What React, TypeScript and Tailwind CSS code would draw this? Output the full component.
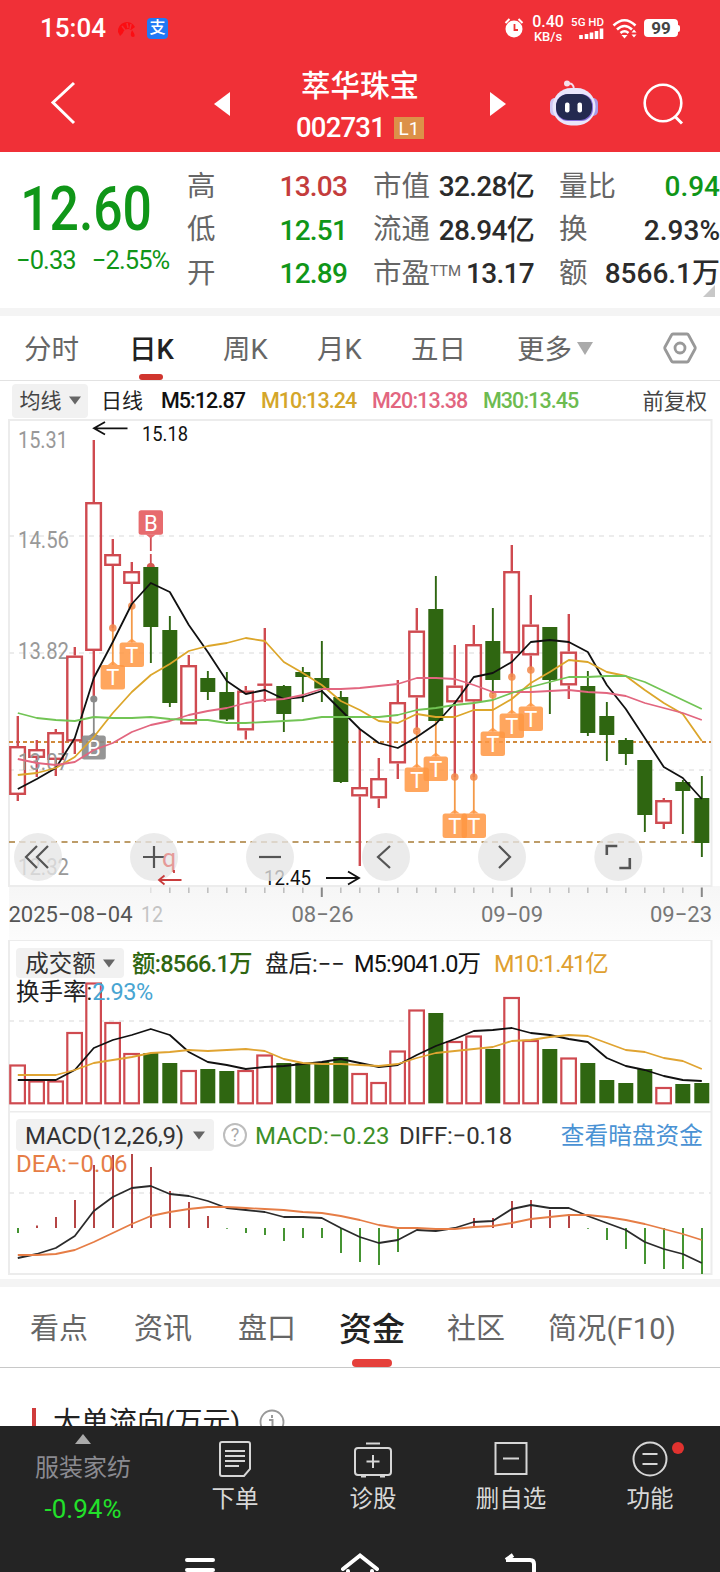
import type { ReactNode } from "react";

type Candle = { up: boolean; high: number; top: number; bottom: number; low: number };

const RED = "#cf4a50";
const GREEN = "#2f6611";
const STEP = 19;
const x = (i: number) => 17.8 + STEP * i;

// [up, high, bodyTop, bodyBottom, low]
const RAW: [number, number, number, number, number][] = [
  [1, 716, 746, 795, 801], [1, 740, 749, 758, 777], [1, 729, 732, 760, 776], [1, 647, 655.5, 741.5, 754],
  [1, 440, 502, 651, 696], [1, 539, 554, 566, 628], [1, 562, 571, 584, 605], [0, 563, 567, 627, 663],
  [0, 616, 630, 703, 707], [1, 655, 665, 724.5, 724.5], [0, 671, 678, 692, 700], [0, 672, 692, 719.5, 721],
  [1, 686, 690.5, 730.5, 739.5], [1, 628, 684, 685.5, 702], [0, 685, 686, 714, 732], [0, 667, 672, 677, 702],
  [0, 641, 678, 688.5, 702], [0, 691, 697, 782, 783], [1, 729, 787, 796.5, 866], [1, 758, 778, 798.5, 808],
  [1, 680, 702, 763.5, 779], [1, 608, 630.5, 697.5, 730], [0, 576, 609, 721, 721], [1, 645, 685.5, 702.5, 777],
  [1, 625, 644, 701.5, 777], [0, 608, 641, 680, 694], [1, 545, 571, 653.5, 677], [1, 595, 624.5, 655.5, 670],
  [0, 627, 627, 680, 714], [1, 614, 651.5, 685.5, 699], [0, 671, 686, 733, 736], [0, 702, 716, 735, 761],
  [0, 738, 740, 754, 765], [0, 760, 760, 815, 832], [1, 798, 800, 824, 829], [0, 780, 782, 791, 834],
  [0, 776, 798, 843, 857],
];

const candles: Candle[] = RAW.map(([up, high, top, bottom, low]) => ({ up: up === 1, high, top, bottom, low }));

const MA5 = [789, 779, 768, 738, 678, 642, 604, 583, 592, 625, 652, 681, 694, 690, 699, 697, 691, 710, 729, 743, 748, 737, 724, 703, 677, 673, 662, 642, 640, 642, 652, 685, 709, 738, 767, 778, 799];
const MA10 = [775, 773, 768, 757, 737, 713, 692, 675, 664, 651, 646, 643, 638, 641, 662, 673, 685, 701, 710, 721, 723, 714, 717, 717, 710, 710, 699, 683, 672, 660, 662, 672, 676, 690, 703, 714, 741];
const MA20 = [759, 763, 765, 762, 750, 743, 732, 725, 721, 715, 711, 708, 703, 700, 699, 695, 689, 689, 688, 686, 684, 678, 678, 679, 685, 692, 692, 692, 691, 690, 692, 693, 696, 703, 708, 713, 720];
const MA30 = [713, 718, 720, 721, 717, 718, 718, 717, 719, 720, 720, 723, 723, 722, 721, 720, 717, 717, 717, 717, 715, 710, 708, 705, 703, 700, 693, 687, 682, 677, 677, 676, 676, 682, 691, 700, 709];

const VOL = [1064.5, 1080.5, 1080.5, 1032, 982.5, 1022, 1053, 1053, 1063, 1070, 1069, 1071, 1070, 1054.5, 1063, 1063, 1062, 1057, 1073, 1082, 1050.5, 1009.5, 1013, 1041, 1035.5, 1049, 997, 1040, 1049, 1057.5, 1063, 1080, 1083, 1069, 1087, 1084, 1083];
const VOL5 = [1080, 1080, 1080, 1070, 1048, 1040, 1035, 1029, 1035, 1052, 1062, 1065, 1069, 1067, 1066, 1064, 1062, 1059, 1063, 1067, 1065, 1055, 1046, 1039, 1031, 1030, 1028, 1033, 1035, 1039, 1042, 1058, 1066, 1070, 1076, 1080, 1081];
const VOL10 = [1075, 1075, 1075, 1070, 1063, 1060, 1057, 1053, 1052, 1050, 1051, 1050, 1049, 1051, 1059, 1063, 1064, 1064, 1065, 1066, 1064, 1058, 1053, 1051, 1049, 1047, 1041, 1040, 1037, 1035, 1036, 1043, 1050, 1052, 1058, 1061, 1069];

const MACD_ZERO = 1228;
const MACD = [1233, 1225.5, 1217, 1200, 1165, 1155, 1154, 1167, 1191, 1202, 1216, 1228.7, 1233, 1235, 1241, 1238, 1238, 1253, 1262, 1265, 1252, 1228, 1228, 1228, 1218, 1218, 1201, 1200, 1210, 1214, 1228.7, 1240, 1249, 1264, 1269, 1269, 1274];
const DIFF = [1258, 1254, 1248, 1236, 1211, 1197, 1188, 1186, 1194, 1196, 1201, 1208, 1210, 1212, 1217, 1217, 1218, 1228, 1237, 1243, 1240, 1230, 1231, 1228, 1222, 1221, 1209, 1205, 1208, 1208, 1216, 1223, 1230, 1242, 1249, 1254, 1263];
const DEA = [1255, 1255, 1254, 1250, 1242, 1233, 1224, 1216, 1212, 1209, 1207, 1207, 1208, 1209, 1210, 1212, 1213, 1216, 1220, 1225, 1228, 1228, 1229, 1229, 1227, 1226, 1223, 1219, 1217, 1215, 1215, 1217, 1220, 1224, 1229, 1234, 1240];

// trade markers: candle index, dot y, box top
const T_MARKS: [number, number, number][] = [
  [5, 628, 665], [6, 606, 642.5], [21, 731, 767.5], [22, 721, 756.5], [23, 777, 813.5],
  [24, 777, 813.5], [25, 695, 731.5], [26, 677, 713.5], [27, 670, 706.5],
];

function Line({ data, color }: { data: number[]; color: string }) {
  return (
    <polyline
      points={data.map((y, i) => `${x(i)},${y}`).join(" ")}
      fill="none"
      stroke={color}
      strokeWidth={1.8}
      strokeLinejoin="round"
    />
  );
}

function Grid({ y, color = "#e6e6e6", dash = "5 5", w = 1.5 }: { y: number; color?: string; dash?: string; w?: number }) {
  return <line x1={9} x2={711} y1={y} y2={y} stroke={color} strokeWidth={w} strokeDasharray={dash} />;
}

function Label({ at, y, w, size = 23, fill = "#999", children }: { at: number; y: number; w: number; size?: number; fill?: string; children: string }) {
  return (
    <text x={at} y={y} fontSize={size} fill={fill} textLength={w} lengthAdjust="spacingAndGlyphs">
      {children}
    </text>
  );
}

function RoundButton({ cx, children }: { cx: number; children: ReactNode }) {
  return (
    <g transform={`translate(${cx} 857)`}>
      <circle r={24} fill="#e6e6e6" fillOpacity={0.78} />
      <g stroke="#555" strokeWidth={2.2} fill="none">{children}</g>
    </g>
  );
}

function PriceChart() {
  return (
    <svg width="720" height="521" viewBox="0 419 720 521" className="block">
      <defs>
        <linearGradient id="axis" x1="0" x2="0" y1="0" y2="1">
          <stop offset="0" stopColor="#f6f6f6" />
          <stop offset="1" stopColor="#fcfcfc" />
        </linearGradient>
      </defs>
      <rect x={9} y={886} width={711} height={54} fill="url(#axis)" />
      <rect x={9} y={420} width={702.5} height={466} fill="#fff" stroke="#ececec" strokeWidth={2} />
      <Grid y={536} />
      <Grid y={653} />
      <Grid y={770} />
      <Grid y={742} color="#d08a3c" dash="4 3" w={1.8} />
      <Grid y={842} color="#bd9c68" dash="6 4.5" w={1.8} />

      <Label at={18} y={447.5} w={50}>15.31</Label>
      <Label at={18} y={548} w={51}>14.56</Label>
      <Label at={18} y={659} w={51}>13.82</Label>
      <Label at={18} y={874.5} w={51}>12.32</Label>

      {candles.map((c, i) => (
        <g key={i}>
          {c.up ? (
            <g stroke={RED} strokeWidth={2.4} fill="none">
              <path d={`M${x(i)} ${c.high}V${c.top}M${x(i)} ${c.bottom}V${c.low}`} />
              {c.bottom - c.top < 3 ? (
                <path d={`M${x(i) - 7.5} ${c.top + 0.7}h15`} />
              ) : (
                <rect x={x(i) - 7.5} y={c.top + 1.2} width={14.6} height={c.bottom - c.top - 2.4} />
              )}
            </g>
          ) : (
            <g fill={GREEN}>
              <rect x={x(i) - 0.9} y={c.high} width={1.9} height={c.low - c.high} />
              <rect x={x(i) - 7.5} y={c.top} width={15} height={c.bottom - c.top} />
            </g>
          )}
        </g>
      ))}
      <Label at={18} y={770} w={51}>13.07</Label>

      <g>
        <path d={`M${x(4)} 699V736`} stroke="#8a8a8a" strokeWidth={1.8} />
        <circle cx={x(4)} cy={699} r={3.6} fill="#8a8a8a" />
        <path d={`M${x(4) - 5} 736l5 -4 5 4z`} fill="#8a8a8a" />
        <rect x={x(4) - 12} y={735.5} width={24} height={24} rx={2.5} fill="#8a8a8a" fillOpacity={0.9} />
        <text x={x(4)} y={755.5} fontSize={22} fill="#fff" textAnchor="middle">B</text>
      </g>

      {T_MARKS.map(([i, dot, top]) => (
        <g key={i}>
          <path d={`M${x(i)} ${dot}V${top}`} stroke="#f49a48" strokeWidth={1.8} />
          {i !== 22 && <circle cx={x(i)} cy={dot} r={3.8} fill="#f2884a" fillOpacity={0.85} />}
          <path d={`M${x(i) - 5} ${top}l5 -4 5 4z`} fill="#ff9742" fillOpacity={0.85} />
          <rect x={x(i) - 12.2} y={top} width={24.4} height={24.4} rx={2.5} fill="#ff9742" fillOpacity={0.85} />
          <text x={x(i)} y={top + 20} fontSize={22} fill="#fff" textAnchor="middle">T</text>
        </g>
      ))}

      <Line data={MA5} color="#111" />
      <Line data={MA10} color="#dca62b" />
      <Line data={MA20} color="#e2667f" />
      <Line data={MA30} color="#72c455" />

      <path d={`M${x(7)} 537V551M${x(7)} 554V564`} stroke="#cf4a50" strokeWidth={1.8} />
      <path d={`M${x(7) - 4} 567a4 4 0 0 1 8 0z`} fill="#d5574f" />
      <path d={`M${x(7) - 5} 534.5l5 4 5-4z`} fill="#e76b6e" />
      <rect x={x(7) - 12.2} y={510.3} width={24.4} height={24.4} rx={2.5} fill="#e76b6e" />
      <text x={x(7)} y={530.5} fontSize={22} fill="#fff" textAnchor="middle">B</text>

      <path d="M127.5 428.3H94M105 422L94 428.3L105 434.5" stroke="#111" strokeWidth={1.8} fill="none" />
      <Label at={142} y={441} w={46} size={21} fill="#111">15.18</Label>
      <Label at={264} y={884.5} w={47} size={21} fill="#111">12.45</Label>
      <path d="M326 878H359M348 871.5L359 878L348 884.5" stroke="#111" strokeWidth={1.8} fill="none" />

      <RoundButton cx={38}><path d="M-1 -11L-12 0L-1 11M10 -11L-1 0L10 11" /></RoundButton>
      <RoundButton cx={154}><path d="M-11 0H11M0 -11V11" /></RoundButton>
      <RoundButton cx={270}><path d="M-11 0H11" /></RoundButton>
      <RoundButton cx={386}><path d="M4 -11L-8 0L4 11" /></RoundButton>
      <RoundButton cx={502}><path d="M-3 -11L8 0L-3 11" /></RoundButton>
      <RoundButton cx={618.3}><path d="M-11.5 -2V-11H-1M11.5 1V11H1" strokeWidth={2.6} /></RoundButton>
      <text x={162} y={867} fontSize={25} fill="#e59a98">q</text>
      <path d="M181.5 880H159M164.5 875.5L159 880L164.5 884.5M174 870v3" stroke="#c93c3c" strokeWidth={1.8} fill="none" />

      {candles.map((_, i) =>
        i < 7 ? null : (
          <path
            key={i}
            d={`M${x(i)} 887.5V${i % 10 === 6 ? 897 : 893}`}
            stroke={i % 10 === 6 ? "#888" : "#c0c0c0"}
            strokeWidth={i % 10 === 6 ? 2 : 1.6}
            strokeOpacity={i === 7 ? 0.4 : 1}
          />
        )
      )}
      <Label at={8.5} y={921.5} w={124} size={22.5} fill="#555">2025−08−04</Label>
      <Label at={141} y={921.5} w={22} size={22.5} fill="#c4c4c4">12</Label>
      <Label at={291.5} y={921.5} w={62} size={22.5} fill="#777">08−26</Label>
      <Label at={481} y={921.5} w={62} size={22.5} fill="#777">09−09</Label>
      <Label at={650} y={921.5} w={62} size={22.5} fill="#777">09−23</Label>
    </svg>
  );
}

function VolumeChart() {
  return (
    <svg width="720" height="172" viewBox="0 940 720 172" className="absolute inset-0">
      <rect x={9} y={940} width={702.5} height={172} fill="none" stroke="#ececec" strokeWidth={2} />
      <Grid y={1021} />
      {VOL.map((top, i) =>
        candles[i].up ? (
          <rect key={i} x={x(i) - 7.5} y={top + 1} width={14.6} height={1102.3 - top} fill="#fff" stroke={RED} strokeWidth={2.2} />
        ) : (
          <rect key={i} x={x(i) - 7.5} y={top} width={15} height={1103.3 - top} fill={GREEN} />
        )
      )}
      <Line data={VOL5} color="#111" />
      <Line data={VOL10} color="#e0a432" />
    </svg>
  );
}

function MacdChart() {
  return (
    <svg width="720" height="163" viewBox="0 1112 720 163" className="absolute inset-0">
      <path d="M9 1111.5V1274H711.5V1111.5H9" fill="none" stroke="#ececec" strokeWidth={2} />
      <Grid y={1193} />
      {MACD.map((y, i) => (
        <path key={i} d={`M${x(i) + 0.2} ${MACD_ZERO}V${y}`} stroke={y < MACD_ZERO ? "#b23c3c" : "#3c8f28"} strokeWidth={1.9} />
      ))}
      <Line data={DIFF} color="#2b2b2b" />
      <Line data={DEA} color="#e67d46" />
    </svg>
  );
}

function Caret({ className = "" }: { className?: string }) {
  return (
    <svg width="12" height="9" viewBox="0 0 12 9" className={className}>
      <path d="M0 0.5H12L6 8.5Z" fill="currentColor" />
    </svg>
  );
}

function StatusBar() {
  return (
    <div className="flex h-[56px] items-center pl-[40px] pr-[40px]">
      <span className="w-[77px] text-[26px] font-medium leading-none">15:04</span>
      <svg width="20" height="18" viewBox="0 0 20 18" className="mt-[2px]">
        <path d="M1 12A9 9 0 0 1 18 7L14 10A5 5 0 0 0 6 13L3 16ZM15 10q5 7 1 7t-1 -7" fill="#fb0d12" />
        <path d="M5 6l3 4M10 3l1 5M14 4l-1 5" stroke="#f03037" strokeWidth="1.5" />
      </svg>
      <span className="ml-[10px] flex h-[21px] w-[21px] items-center justify-center rounded bg-[#2079f5] text-[16px] font-medium leading-none">支</span>
      <div className="ml-auto flex items-center">
        <svg width="20" height="22" viewBox="0 0 20 22" className="mr-[7px]">
          <circle cx="10" cy="12" r="8.5" fill="#fff" />
          <path d="M10.5 7v6h3.5" stroke="#e33" strokeWidth="1.8" fill="none" />
          <path d="M1.5 6L5.5 2M18.5 6L14.5 2" stroke="#fff" strokeWidth="2" />
        </svg>
        <div className="flex w-[34px] flex-col items-center font-medium">
          <span className="text-[16px] leading-[16px]">0.40</span>
          <span className="text-[13px] leading-[13px]">KB/s</span>
        </div>
        <div className="ml-[5px] flex w-[34px] flex-col items-end">
          <span className="whitespace-nowrap text-[11.5px] font-medium leading-[12px]">5G HD</span>
          <svg width="25" height="12" viewBox="0 0 25 12">
            <path d="M2 11V7M7.5 11V6M12.5 11V4.5M17.5 11V3M22.5 11V0.5" stroke="#fff" strokeWidth="3.6" />
          </svg>
        </div>
        <svg width="28" height="21" viewBox="0 0 28 21" className="ml-[8px]">
          <g fill="none" stroke="#fff" strokeWidth="2.6">
            <path d="M1.5 7.5Q12.5 -3 23.5 7.5" />
            <path d="M5 11.5Q12.5 4.5 20 11.5" />
            <path d="M8.5 15Q12.5 11.5 16.5 15" />
          </g>
          <path d="M9.5 17h6l-3 3.5zM19.5 14.5h5l-2.5-3zM19.5 16.5h5l-2.5 3z" fill="#fff" />
        </svg>
        <span className="ml-[4px] flex h-[18px] w-[34px] items-center justify-center rounded-[4px] bg-white text-[17px] font-bold leading-none text-[#444]">99</span>
        <span className="h-[7px] w-[2px] rounded-r bg-white" />
      </div>
    </div>
  );
}

function Header() {
  return (
    <header className="h-[152px] bg-[#f03037] text-white">
      <StatusBar />
      <div className="flex h-[96px] items-center">
        <svg width="26" height="44" viewBox="0 0 26 44" className="-mt-[3px] ml-[50px]">
          <path d="M24 2L3 21.5L24 42" fill="none" stroke="#fff" strokeWidth="3" />
        </svg>
        <svg width="16" height="24" viewBox="0 0 16 24" className="ml-[138px]"><path d="M16 0V24L0 12Z" fill="#fff" /></svg>
        <div className="flex w-[260px] flex-col items-center">
          <h1 className="mt-[7px] text-[29.5px] font-medium leading-[40px]">萃华珠宝</h1>
          <div className="mt-[1px] flex h-[42px] items-center gap-[9px]">
            <span className="text-[27.5px] font-medium leading-none tracking-[-0.8px]">002731</span>
            <span className="flex h-[22px] w-[30px] items-center justify-center bg-[#dc9149] text-[19px] leading-none">L1</span>
          </div>
        </div>
        <svg width="16" height="24" viewBox="0 0 16 24"><path d="M0 0V24L16 12Z" fill="#fff" /></svg>
        <svg width="50" height="46" viewBox="0 0 50 46" className="ml-[43px] -mt-[3px]">
          <path d="M18 4q7 -2 7 6" fill="none" stroke="#f3dcec" strokeWidth="2" />
          <circle cx="18" cy="3.5" r="3" fill="#f6dfea" />
          <rect x="1" y="18" width="10" height="18" rx="5" fill="#cfc6f2" />
          <rect x="39" y="18" width="10" height="18" rx="5" fill="#a79ae6" />
          <rect x="3.5" y="8" width="43" height="37.5" rx="18.5" fill="#e9e6fb" />
          <rect x="7" y="14" width="37" height="27" rx="12" fill="#8a6fdc" />
          <rect x="7" y="14" width="36" height="26" rx="12" fill="#242a50" />
          <rect x="16" y="22.5" width="4.5" height="10" rx="2" fill="#fff" />
          <rect x="28.5" y="22.5" width="4.5" height="10" rx="2" fill="#fff" />
        </svg>
        <svg width="42" height="42" viewBox="0 0 42 42" className="ml-[44px] -mt-px">
          <circle cx="20" cy="20" r="18.3" fill="none" stroke="#fff" strokeWidth="2.6" />
          <path d="M31.500 33L39 40.500" stroke="#fff" strokeWidth="3" />
        </svg>
      </div>
    </header>
  );
}

function Cell({ label, value, color = "text-[#2b2b2b] tracking-[-0.7px]", sup }: { label: string; value: string; color?: string; sup?: string }) {
  return (
    <div className="flex h-[43.7px] items-center justify-between whitespace-nowrap text-[28px] leading-none">
      <span className="flex text-[28.5px] text-[#666]">
        {label}
        {sup && <sup className="top-[4px] text-[15px] leading-none">{sup}</sup>}
      </span>
      <span className={`font-medium ${color}`}>{value}</span>
    </div>
  );
}

function Quote() {
  return (
    <section className="relative flex h-[156px] pt-[13px]">
      <div className="w-[187px] text-[#109618]">
        <div className="mt-[8px] h-[68px] origin-left scale-x-[0.84] pl-[24px] text-[61.5px] font-medium leading-[72px]">12.60</div>
        <div className="flex h-[40px] items-center gap-[16px] pl-[16px] text-[25.5px] leading-none tracking-[-0.9px]">
          <span>−0.33</span>
          <span>−2.55%</span>
        </div>
      </div>
      <div className="w-[160px]">
        <Cell label="高" value="13.03" color="text-[#c43c3c] tracking-[-0.8px]" />
        <Cell label="低" value="12.51" color="text-[#109618] tracking-[-0.8px]" />
        <Cell label="开" value="12.89" color="text-[#109618] tracking-[-0.8px]" />
      </div>
      <div className="ml-[26px] w-[161px]">
        <Cell label="市值" value="32.28亿" />
        <Cell label="流通" value="28.94亿" />
        <Cell label="市盈" sup="TTM" value="13.17" />
      </div>
      <div className="ml-[25px] w-[161px]">
        <Cell label="量比" value="0.94" color="text-[#109618]" />
        <Cell label="换" value="2.93%" color="text-[#2b2b2b]" />
        <Cell label="额" value="8566.1万" color="text-[#2b2b2b]" />
      </div>
      <svg width="12" height="12" viewBox="0 0 12 12" className="absolute right-[5px] bottom-[11px]"><path d="M12 0V12H0Z" fill="#c8c8c8" /></svg>
    </section>
  );
}

function PeriodTabs() {
  return (
    <nav className="relative flex h-[65px] items-center border-b border-[#e2e2e2] pl-[24px] pt-[4px] text-[27.5px] leading-none text-[#666]">
      <span className="w-[105px]">分时</span>
      <span className="w-[94px] font-medium text-[#222]">日K</span>
      <span className="w-[94px]">周K</span>
      <span className="w-[94px]">月K</span>
      <span className="w-[106px]">五日</span>
      <span className="w-[60px]">更多</span>
      <svg width="16" height="13" viewBox="0 0 16 13" className="-mt-[4px]"><path d="M0 0H16L8 13Z" fill="#aaa" /></svg>
      <svg width="34" height="32" viewBox="0 0 34 32" className="-mt-[4px] ml-[70px]">
        <path d="M10 2H24Q25 2 25.5 3L32 15Q32.5 16 32 17L25.5 29Q25 30 24 30H10Q9 30 8.5 29L2 17Q1.500 16 2 15L8.500 3Q9 2 10 2Z" fill="none" stroke="#999" strokeWidth="2.8" />
        <circle cx="17" cy="16" r="5" fill="none" stroke="#999" strokeWidth="2.8" />
      </svg>
      <span className="absolute bottom-0 left-[139px] h-[6px] w-[24px] rounded-full bg-[#d0352e]" />
    </nav>
  );
}

function MaRow() {
  return (
    <div className="flex h-[38px] items-center whitespace-nowrap pl-[12px] pr-[13px] pt-px text-[21.5px] font-medium leading-none tracking-[-0.95px]">
      <button className="flex h-[34px] w-[76px] items-center justify-center gap-[7px] rounded bg-[#f1f1f1] font-normal tracking-normal text-[#444]">
        <span className="pt-[2px] text-[21px]">均线</span>
        <Caret className="text-[#666]" />
      </button>
      <span className="ml-[13px] w-[60px] pt-[2px] text-[21px] font-normal tracking-normal text-[#222]">日线</span>
      <span className="w-[100px] pt-px text-[#111]">M5:12.87</span>
      <span className="w-[111px] pt-px text-[#d4a62a]">M10:13.24</span>
      <span className="w-[111px] pt-px text-[#e2667f]">M20:13.38</span>
      <span className="pt-px text-[#6dbb50]">M30:13.45</span>
      <span className="ml-auto pt-[2px] font-normal tracking-normal text-[#444]">前复权</span>
    </div>
  );
}

function VolumePanel() {
  return (
    <section className="relative h-[172px]">
      <VolumeChart />
      <div className="relative whitespace-nowrap pl-[16px] pt-[7px] text-[23.5px] leading-none">
        <div className="flex h-[32px] items-center">
          <button className="flex h-[30px] w-[108px] items-center justify-center gap-[7px] rounded bg-[#f1f1f1] text-[#333]">
            <span className="pt-[3px]">成交额</span>
            <Caret className="text-[#666]" />
          </button>
          <span className="ml-[8px] w-[133px] pt-[3px] font-medium tracking-[-0.75px] text-[#2f6611]">额:8566.1万</span>
          <span className="w-[89px] pt-[3px] text-[#222]">盘后:−−</span>
          <span className="w-[140px] pt-[3px] tracking-[-0.9px] text-[#111]">M5:9041.0万</span>
          <span className="pt-[3px] tracking-[-0.9px] text-[#dfa030]">M10:1.41亿</span>
        </div>
        <div className="flex h-[26px] items-center pt-[2px] text-[#222]">
          换手率:<span className="tracking-[-0.5px] text-[#48a5d2]">2.93%</span>
        </div>
      </div>
    </section>
  );
}

function MacdPanel() {
  return (
    <section className="relative h-[167px]">
      <MacdChart />
      <div className="relative whitespace-nowrap pl-[16px] pt-[7px] text-[24px] leading-none">
        <div className="flex h-[32px] items-center">
          <button className="flex h-[32px] w-[198px] items-center justify-between rounded bg-[#f1f1f1] pl-[9px] pr-[9px] text-[#333]">
            <span className="pt-[2px] tracking-[-0.2px]">MACD(12,26,9)</span>
            <Caret className="text-[#666]" />
          </button>
          <span className="ml-[9px] flex h-[24px] w-[24px] items-center justify-center rounded-full border-2 border-[#bdbdbd] text-[18px] text-[#aaa]">?</span>
          <span className="ml-[8px] w-[144px] pt-[2px] text-[#3c8f28]">MACD:−0.23</span>
          <span className="pt-[2px] tracking-[-0.2px] text-[#333]">DIFF:−0.18</span>
          <span className="ml-auto pr-[17px] pt-[3px] text-[23.7px] text-[#4a92d4]">查看暗盘资金</span>
        </div>
        <div className="flex h-[25px] items-center pt-px text-[#e67d46]">DEA:−0.06</div>
      </div>
    </section>
  );
}

function InfoTabs() {
  return (
    <nav className="relative flex h-[81px] items-center border-b border-[#c8c8c8] pl-[30px] pt-[4px] text-[29px] leading-none text-[#666]">
      <span className="w-[104px]">看点</span>
      <span className="w-[104px]">资讯</span>
      <span className="w-[101px]">盘口</span>
      <span className="w-[108px] text-[33px] font-medium text-[#222]">资金</span>
      <span className="w-[101px]">社区</span>
      <span className="tracking-[0.2px]">简况(F10)</span>
      <span className="absolute bottom-0 left-[352px] h-[8px] w-[40px] rounded-full bg-[#e5403b]" />
    </nav>
  );
}

function NavItem({ label, children, className = "" }: { label: string; children: ReactNode; className?: string }) {
  return (
    <div className={`flex w-[100px] flex-col items-center pt-[14px] ${className}`}>
      <svg width="40" height="38" viewBox="0 0 40 38" fill="none" stroke="#d6d6d6" strokeWidth="2">{children}</svg>
      <span className="mt-[8px] text-[23.5px] leading-[26px] text-[#d8d8d8]">{label}</span>
    </div>
  );
}

function BottomBar() {
  return (
    <footer className="relative h-[146px] bg-[#242424]">
      <div className="flex">
        <div className="ml-[33px] flex w-[100px] flex-col items-center pt-[8px]">
          <svg width="16" height="10" viewBox="0 0 16 10"><path d="M8 0L16 10H0Z" fill="#aaa" /></svg>
          <span className="mt-[10px] whitespace-nowrap text-[24px] leading-[28px] text-[#8a8a90]">服装家纺</span>
          <span className="mt-[13px] text-[26px] leading-[28px] text-[#22e02a]">-0.94%</span>
        </div>
        <NavItem label="下单" className="ml-[52px]">
          <path d="M7 2H33Q35 2 35 4V29L29 36H7Q5 36 5 34V4Q5 2 7 2Z" />
          <path d="M10 11H30M10 16H30M10 21H30M10 26H24" />
        </NavItem>
        <NavItem label="诊股" className="ml-[38px]">
          <rect x="2" y="8" width="36" height="27" rx="3" />
          <path d="M13 3.5H27M8 36.5h5M27 36.5h5M20 15V28M13.5 21.5H26.5" />
        </NavItem>
        <NavItem label="删自选" className="ml-[38px]">
          <rect x="4.5" y="3" width="31" height="31" />
          <path d="M12 18.5H28" />
        </NavItem>
        <NavItem label="功能" className="ml-[39px]">
          <circle cx="20" cy="19" r="16.5" />
          <path d="M12.5 14H27.5M12.5 24H27.5" />
        </NavItem>
      </div>
      <span className="absolute right-[36px] top-[16px] h-[12px] w-[12px] rounded-full bg-[#e0322f]" />
      <svg width="352" height="20" viewBox="185 1552 352 20" className="absolute bottom-0 left-[185px]" fill="none" stroke="#fff" strokeWidth="4">
        <path d="M187 1560H213M187 1570H213" strokeLinecap="round" />
        <path d="M343 1569L360 1555.5L377 1569M348 1571v3M372 1571v3" strokeLinecap="round" />
        <path d="M506 1560H530Q534 1560 534 1564V1574M506 1560L513 1555" />
      </svg>
    </footer>
  );
}

export default function App() {
  return (
    <div className="h-[1572px] w-[720px] overflow-hidden bg-white font-['Roboto','Noto_Sans_CJK_SC',sans-serif]">
      <Header />
      <Quote />
      <div className="h-[8px] bg-[#f4f4f4]" />
      <PeriodTabs />
      <MaRow />
      <PriceChart />
      <VolumePanel />
      <MacdPanel />
      <div className="h-[8px] bg-[#f4f4f4]" />
      <InfoTabs />
      <section className="h-[58px] overflow-hidden pt-[40px]">
        <div className="flex h-[28px] items-center pl-[32px]">
          <span className="h-[28px] w-[4px] bg-[#d03c3c]" />
          <h2 className="ml-[17px] whitespace-nowrap pt-[2px] text-[28px] leading-none text-[#222]">大单流向(万元)</h2>
          <svg width="26" height="26" viewBox="0 0 26 26" className="ml-[19px] shrink-0">
            <circle cx="13" cy="13" r="11.5" fill="none" stroke="#999" strokeWidth="1.8" />
            <path d="M10 11h3.5v8M13 6v3" stroke="#999" strokeWidth="2" fill="none" />
          </svg>
        </div>
      </section>
      <BottomBar />
    </div>
  );
}
